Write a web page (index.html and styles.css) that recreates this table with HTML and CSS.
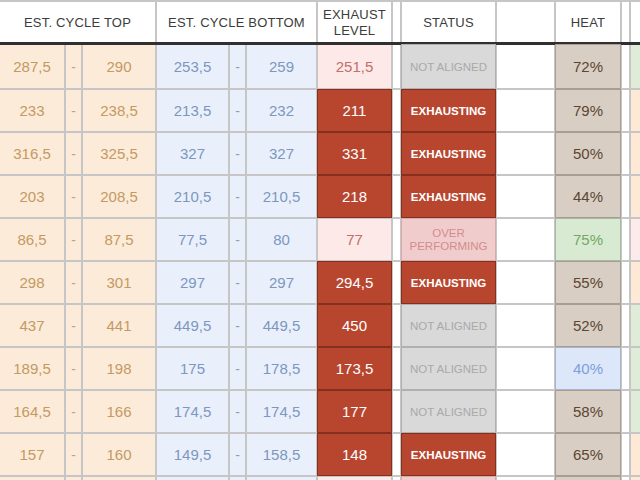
FILE: index.html
```html
<!DOCTYPE html>
<html>
<head>
<meta charset="utf-8">
<link rel="stylesheet" href="styles.css">
</head>
<body>
<div class="sheet">
  <div class="head">
    <div class="hc span3">EST. CYCLE TOP</div>
    <div class="hc span3">EST. CYCLE BOTTOM</div>
    <div class="hc two">EXHAUST<br>LEVEL</div>
    <div class="hc"></div>
    <div class="hc">STATUS</div>
    <div class="hc"></div>
    <div class="hc">HEAT</div>
    <div class="hc"></div>
    <div class="hc"></div>
  </div>
  <div class="body">
    <div class="c o">287,5</div><div class="c od">-</div><div class="c o">290</div>
    <div class="c b">253,5</div><div class="c bd">-</div><div class="c b">259</div>
    <div class="c xp">251,5</div><div class="c w"></div><div class="c sg">NOT ALIGNED</div><div class="c w"></div>
    <div class="c kt">72%</div><div class="c w"></div><div class="c mg"></div>

    <div class="c o">233</div><div class="c od">-</div><div class="c o">238,5</div>
    <div class="c b">213,5</div><div class="c bd">-</div><div class="c b">232</div>
    <div class="c xr">211</div><div class="c w"></div><div class="c sr">EXHAUSTING</div><div class="c w"></div>
    <div class="c kt">79%</div><div class="c w"></div><div class="c mo"></div>

    <div class="c o">316,5</div><div class="c od">-</div><div class="c o">325,5</div>
    <div class="c b">327</div><div class="c bd">-</div><div class="c b">327</div>
    <div class="c xr">331</div><div class="c w"></div><div class="c sr">EXHAUSTING</div><div class="c w"></div>
    <div class="c kt">50%</div><div class="c w"></div><div class="c mo"></div>

    <div class="c o">203</div><div class="c od">-</div><div class="c o">208,5</div>
    <div class="c b">210,5</div><div class="c bd">-</div><div class="c b">210,5</div>
    <div class="c xr">218</div><div class="c w"></div><div class="c sr">EXHAUSTING</div><div class="c w"></div>
    <div class="c kt">44%</div><div class="c w"></div><div class="c mo"></div>

    <div class="c o">86,5</div><div class="c od">-</div><div class="c o">87,5</div>
    <div class="c b">77,5</div><div class="c bd">-</div><div class="c b">80</div>
    <div class="c xp">77</div><div class="c w"></div><div class="c sp">OVER<br>PERFORMING</div><div class="c w"></div>
    <div class="c kg">75%</div><div class="c w"></div><div class="c mp"></div>

    <div class="c o">298</div><div class="c od">-</div><div class="c o">301</div>
    <div class="c b">297</div><div class="c bd">-</div><div class="c b">297</div>
    <div class="c xr">294,5</div><div class="c w"></div><div class="c sr">EXHAUSTING</div><div class="c w"></div>
    <div class="c kt">55%</div><div class="c w"></div><div class="c mo"></div>

    <div class="c o">437</div><div class="c od">-</div><div class="c o">441</div>
    <div class="c b">449,5</div><div class="c bd">-</div><div class="c b">449,5</div>
    <div class="c xr">450</div><div class="c w"></div><div class="c sg">NOT ALIGNED</div><div class="c w"></div>
    <div class="c kt">52%</div><div class="c w"></div><div class="c mg"></div>

    <div class="c o">189,5</div><div class="c od">-</div><div class="c o">198</div>
    <div class="c b">175</div><div class="c bd">-</div><div class="c b">178,5</div>
    <div class="c xr">173,5</div><div class="c w"></div><div class="c sg">NOT ALIGNED</div><div class="c w"></div>
    <div class="c kb">40%</div><div class="c w"></div><div class="c mg"></div>

    <div class="c o">164,5</div><div class="c od">-</div><div class="c o">166</div>
    <div class="c b">174,5</div><div class="c bd">-</div><div class="c b">174,5</div>
    <div class="c xr">177</div><div class="c w"></div><div class="c sg">NOT ALIGNED</div><div class="c w"></div>
    <div class="c kt">58%</div><div class="c w"></div><div class="c mg"></div>

    <div class="c o">157</div><div class="c od">-</div><div class="c o">160</div>
    <div class="c b">149,5</div><div class="c bd">-</div><div class="c b">158,5</div>
    <div class="c xr">148</div><div class="c w"></div><div class="c sr">EXHAUSTING</div><div class="c w"></div>
    <div class="c kt">65%</div><div class="c w"></div><div class="c mo"></div>

    <div class="c o"></div><div class="c od"></div><div class="c o"></div>
    <div class="c b"></div><div class="c bd"></div><div class="c b"></div>
    <div class="c xp"></div><div class="c w"></div><div class="c sp"></div><div class="c w"></div>
    <div class="c kt"></div><div class="c w"></div><div class="c mo"></div>
  </div>
</div>
</body>
</html>
```

FILE: styles.css
```css
html, body {
  margin: 0;
  padding: 0;
  width: 640px;
  height: 480px;
  overflow: hidden;
  background: #ffffff;
}

.sheet {
  width: 640px;
  height: 480px;
  overflow: hidden;
  background: #c6c6c6;
  padding-top: 2px;
  box-sizing: border-box;
  font-family: "Liberation Sans", Arial, sans-serif;
}

.head,
.body {
  display: grid;
  grid-template-columns: 64px 15px 72px 71px 15px 69px 73px 7px 93px 57px 64px 7px 20px;
  column-gap: 2px;
}

.head {
  grid-template-rows: 40px;
  border-bottom: 3px solid #303030;
}

.hc {
  background: #ffffff;
  display: flex;
  align-items: center;
  justify-content: center;
  text-align: center;
  font-size: 13px;
  color: #3c3c3c;
  letter-spacing: 0.2px;
}

.hc.two {
  line-height: 16px;
  padding-top: 1px;
}

.span3 {
  grid-column: span 3;
}

.body {
  grid-template-rows: 43px repeat(10, 41px) 41px;
  row-gap: 2px;
}

.c {
  display: flex;
  align-items: center;
  justify-content: center;
  text-align: center;
  font-size: 15px;
}

.w { background: #ffffff; }

.o { background: #fcebd9; color: #c39a62; }
.od { background: #fcebd9; color: #c9a274; font-size: 14px; }
.b { background: #e9f0fc; color: #7d97be; }
.bd { background: #e9f0fc; color: #8aa0c2; font-size: 14px; }

.xp { background: #fde9e7; color: #c2706a; }
.xr {
  background: #b8462f;
  color: #ffffff;
  box-shadow: 0 0 0 1px #84301f;
}

.sg {
  background: #d9d9d9;
  color: #a9a9a9;
  font-size: 11.5px;
  box-shadow: 0 0 0 1px #b0b0b0;
}
.sr {
  background: #b8462f;
  color: #ffffff;
  font-size: 11.5px;
  font-weight: bold;
  box-shadow: 0 0 0 1px #84301f;
}
.sp {
  background: #f1cccc;
  color: #d28c8c;
  font-size: 11.5px;
  line-height: 13px;
  box-shadow: 0 0 0 1px #d7aaaa;
}

.kt {
  background: #d8cec4;
  color: #5b4632;
  box-shadow: 0 0 0 1px #a79d93;
}
.kg {
  background: #d9ead3;
  color: #74a862;
  box-shadow: 0 0 0 1px #a9b8a3;
}
.kb {
  background: #dce7f9;
  color: #7c9fe0;
  box-shadow: 0 0 0 1px #aab6c8;
}

.mg { background: #dfedd8; }
.mo { background: #fde9d5; }
.mp { background: #fdeaea; }
```
